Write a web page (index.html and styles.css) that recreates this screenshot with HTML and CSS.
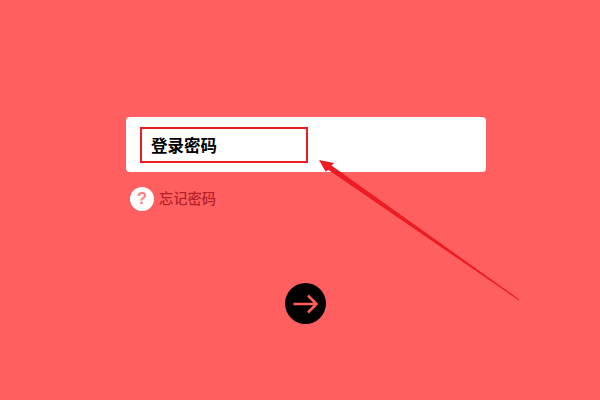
FILE: index.html
```html
<!DOCTYPE html>
<html lang="zh-CN">
<head>
    <meta charset="UTF-8">
    <title>登录</title>
    <link rel="stylesheet" href="styles.css">
</head>
<body>
    <div class="login">
        <div class="card">
            <div class="field">登录密码</div>
        </div>
        <div class="forgot">
            <span class="help">?</span>
            <span class="forgot-text">忘记密码</span>
        </div>
        <div class="next">
            <svg width="26" height="22" viewBox="0 0 26 22">
                <path d="M0.5 11H23.5M15 2.5L23.5 11L15 19.5" fill="none" stroke="#ff5f5f" stroke-width="2.6"/>
            </svg>
        </div>
    </div>

    <!-- annotation drawn on top of the screenshot -->
    <svg class="pointer" width="600" height="400" viewBox="0 0 600 400">
        <path d="M319 160L334 163L331.5 165.5L519.5 299.5L519 300.5L328.5 170L325.5 171.5Z" fill="#ed1c24"/>
    </svg>
</body>
</html>
```

FILE: styles.css
```css
html, body {
    height: 100%;
}
body {
    margin: 0;
    background: #ff5f5f;
    font-family: "Liberation Sans", "Noto Sans CJK SC", sans-serif;
    overflow: hidden;
}
.login {
    width: 360px;
    margin-left: 126px;
    padding-top: 117px;
}
.card {
    box-sizing: border-box;
    height: 55px;
    padding: 10px 14px;
    background: #fff;
    border-radius: 4px;
}
.field {
    box-sizing: border-box;
    width: 168px;
    height: 36px;
    padding-left: 9px;
    border: 2px solid #ed1c24;
    color: #000;
    font-size: 16.5px;
    font-weight: bold;
    line-height: 34px;
}
.forgot {
    display: flex;
    align-items: center;
    gap: 5px;
    margin-top: 15px;
    padding-left: 4px;
}
.help {
    width: 24px;
    height: 24px;
    border-radius: 50%;
    background: #fff;
    color: #ff7f7f;
    font-size: 17px;
    font-weight: bold;
    line-height: 24px;
    text-align: center;
}
.forgot-text {
    color: #b5222a;
    font-size: 14.25px;
    font-weight: 500;
    line-height: 22px;
}
.next {
    display: flex;
    align-items: center;
    justify-content: center;
    width: 41px;
    height: 41px;
    margin: 72px 0 0 159px;
    border-radius: 50%;
    background: #000;
}
.pointer {
    position: absolute;
    top: 0;
    left: 0;
}
```
